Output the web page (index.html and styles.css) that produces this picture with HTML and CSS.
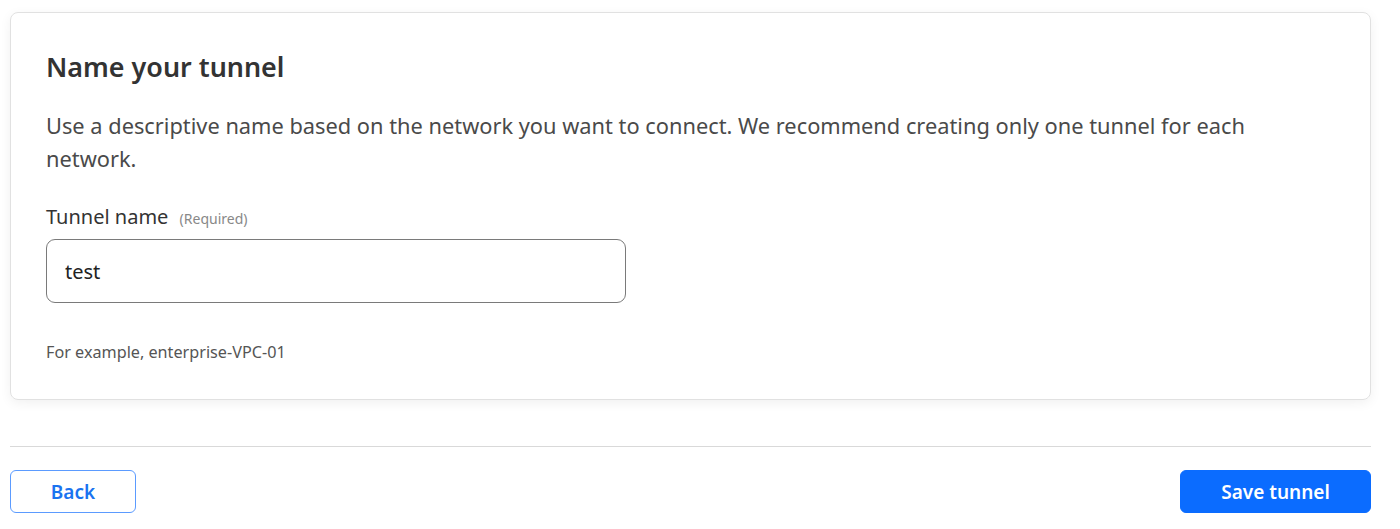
FILE: index.html
```html
<!DOCTYPE html>
<html lang="en">
<head>
<meta charset="utf-8">
<title>Name your tunnel</title>
<link rel="stylesheet" href="styles.css">
</head>
<body>
<main class="page">
  <section class="card">
    <h2 class="card-title">Name your tunnel</h2>
    <p class="card-desc">Use a descriptive name based on the network you want to connect. We recommend creating only one tunnel for each network.</p>
    <div class="field">
      <label class="field-label" for="tname">Tunnel name <span class="field-req">(Required)</span></label>
      <input class="field-input" id="tname" type="text" value="test">
      <p class="field-help">For example, enterprise-VPC-01</p>
    </div>
  </section>
  <hr class="divider">
  <div class="actions">
    <button class="btn btn-secondary" type="button">Back</button>
    <button class="btn btn-primary" type="button">Save tunnel</button>
  </div>
</main>
</body>
</html>
```

FILE: styles.css
```css
* { box-sizing: border-box; }
html, body { margin: 0; padding: 0; background: #fff; }
body {
  font-family: "Noto Sans", "Open Sans", "Liberation Sans", sans-serif;
  color: #404040;
}
.page {
  width: 1361px;
  margin: 12px 0 0 10px;
}
.card {
  border: 1px solid #e1e1e1;
  border-radius: 8px;
  box-shadow: 0 3px 12px rgba(0,0,0,0.06);
  padding: 36px 35px 28px 35px;
  height: 388px;
}
.card-title {
  margin: 0;
  font-size: 26.9px;
  font-weight: 600;
  line-height: 36px;
  color: #333;
}
.card-desc {
  margin: 24px 0 0 0;
  font-size: 21.8px;
  line-height: 33px;
  color: #4a4a4a;
  max-width: 1260px;
}
.field { margin-top: 27px; }
.field-label {
  display: block;
  font-size: 20px;
  line-height: 30px;
  color: #333;
}
.field-req {
  font-size: 14px;
  color: #888;
  margin-left: 6px;
}
.field-input {
  display: block;
  margin-top: 5px;
  width: 580px;
  height: 64px;
  border: 1px solid #7a7a7a;
  border-radius: 9px;
  padding: 0 18px;
  font-family: inherit;
  font-size: 20px;
  color: #222;
  background: #fff;
  outline: none;
}
.field-help {
  margin: 39px 0 0 0;
  font-size: 16.2px;
  line-height: 20px;
  color: #555;
}
.divider {
  border: 0;
  border-top: 1px solid #d9d9d9;
  margin: 46px 0 0 0;
}
.actions {
  display: flex;
  justify-content: space-between;
  margin-top: 23px;
}
.btn {
  height: 43px;
  border-radius: 6px;
  font-family: inherit;
  font-size: 19px;
  font-weight: 600;
  cursor: pointer;
}
.btn-secondary {
  width: 126px;
  background: #fff;
  border: 1px solid #5b9bff;
  color: #1a73f0;
}
.btn-primary {
  width: 191px;
  background: #0b6cff;
  border: 1px solid #0b6cff;
  color: #fff;
}
```
